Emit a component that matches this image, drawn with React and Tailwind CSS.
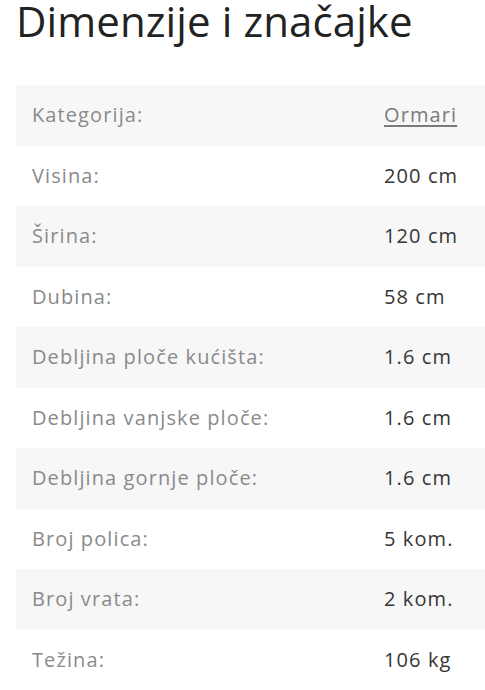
export default function App() {
  const rows = [
    ["Kategorija:", "Ormari", true],
    ["Visina:", "200 cm"],
    ["Širina:", "120 cm"],
    ["Dubina:", "58 cm"],
    ["Debljina ploče kućišta:", "1.6 cm"],
    ["Debljina vanjske ploče:", "1.6 cm"],
    ["Debljina gornje ploče:", "1.6 cm"],
    ["Broj polica:", "5 kom."],
    ["Broj vrata:", "2 kom."],
    ["Težina:", "106 kg"],
  ];
  return (
    <div className="bg-white w-[485px] h-[690px] overflow-hidden pl-4" style={{ fontFamily: "'Open Sans', 'Noto Sans', sans-serif" }}>
      <h2 className="text-[42px] leading-[42px] tracking-[0.1px] text-[#222] m-0 font-normal whitespace-nowrap">Dimenzije i značajke</h2>
      <div className="mt-[43px]">
        {rows.map(([k, v, link], i) => (
          <div key={i} className={`grid grid-cols-[352px_1fr] items-center h-[60.5px] text-[20px] tracking-[1.1px] ${i % 2 === 0 ? "bg-[#f7f7f7]" : "bg-white"}`}>
            <div className="pl-4 text-[#8a8a8a]">{k}</div>
            <div className="pl-4 text-[#363636]">
              {link ? <span className="underline text-[#7a7a7a] underline-offset-[3px]">{v}</span> : v}
            </div>
          </div>
        ))}
      </div>
    </div>
  );
}
